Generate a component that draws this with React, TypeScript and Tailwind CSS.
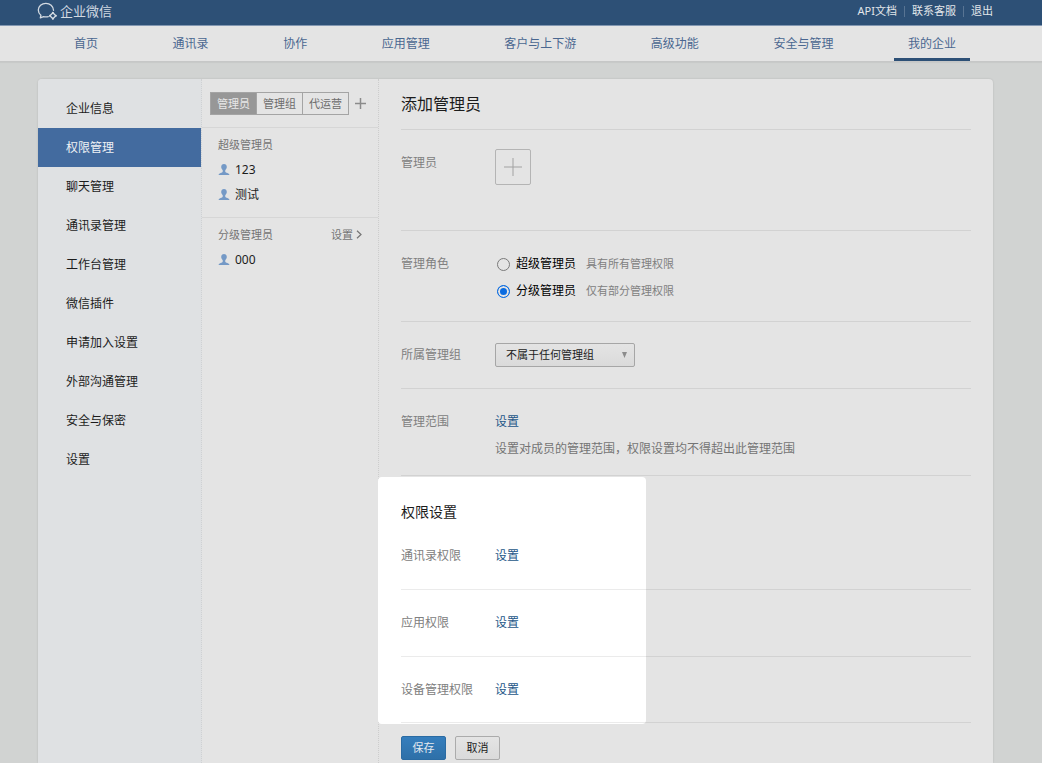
import React, { useState } from "react";

const navItems = ["首页", "通讯录", "协作", "应用管理", "客户与上下游", "高级功能", "安全与管理", "我的企业"];

const sideItems = [
  "企业信息",
  "权限管理",
  "聊天管理",
  "通讯录管理",
  "工作台管理",
  "微信插件",
  "申请加入设置",
  "外部沟通管理",
  "安全与保密",
  "设置",
];

const roles = [
  { id: "super", name: "超级管理员", note: "具有所有管理权限" },
  { id: "sub", name: "分级管理员", note: "仅有部分管理权限" },
];

function Logo() {
  return (
    <svg width="20" height="18" viewBox="0 0 20 18" fill="none" stroke="#d3dae2" strokeLinecap="round" strokeLinejoin="round" aria-hidden="true">
      <path d="M16.500 8.300C16.300 4.300 13 1.300 8.900 1.300 4.700 1.300 1.300 4.300 1.300 8.100c0 2.100 1 3.900 2.600 5.200L3.300 15.800l3.300-1.200c1.700.4 3.200.4 4.700 0" strokeWidth="1.300" />
      <path d="M15.900 10.800l2.900 3-2.900 3-3-3z" strokeWidth="1.300" />
      <path d="M15.900 10.800v.1M12.900 13.800h.1M18.800 13.800h.1M15.900 16.700v.1" strokeWidth="2" />
    </svg>
  );
}

function Person() {
  return (
    <svg width="12" height="12" viewBox="0 0 12 12" fill="#7499c6" aria-hidden="true">
      <path d="M6 0c1.700 0 2.800 1.300 2.800 2.900 0 1.300-.9 2.300-1.400 3-.3.600-.2 1.700.1 2.200.4.600 1.700.9 2.700 1.300.8.300 1.200.8 1.200 1.600H.6c0-.8.4-1.300 1.200-1.600 1-.4 2.300-.7 2.700-1.300.3-.5.4-1.600.1-2.200-.5-.7-1.400-1.700-1.400-3C3.200 1.300 4.300 0 6 0z" />
    </svg>
  );
}

function Row({ label, className, children }: { label: React.ReactNode; className: string; children: React.ReactNode }) {
  return (
    <div className={`flex border-b border-black/8 ${className}`}>
      <div className="w-[94px] shrink-0 pt-[23px] leading-5 text-[#808080]">{label}</div>
      <div className="min-w-0 flex-1">{children}</div>
    </div>
  );
}

function SetLink() {
  return (
    <a href="#set" className="block w-fit pt-[23px] leading-5 text-[#245788]">
      设置
    </a>
  );
}

function Member({ name }: { name: string }) {
  return (
    <li className="flex h-[25px] items-center gap-[5px]">
      <Person />
      <span>{name}</span>
    </li>
  );
}

export default function App() {
  const [role, setRole] = useState("sub");

  return (
    <div className="flex min-h-screen flex-col bg-[#d1d3d2] font-['Noto_Sans','Noto_Sans_CJK_SC',sans-serif] text-xs text-[#1c1c1c]">
      <header className="flex h-[26px] items-center justify-between border-b border-[#8297b1] bg-[#2d5076] pr-[49px] pb-[3px] pl-[37px]">
        <a href="#home" className="flex items-center gap-[3px] text-[13px] leading-5 text-[#d3dae2]">
          <Logo />
          企业微信
        </a>
        <div className="flex items-center text-[11px] leading-4 text-[#e2e6ea]">
          <a href="#api">API文档</a>
          <span className="mx-[7px] h-[11px] w-px bg-[#587493]" />
          <a href="#service">联系客服</a>
          <span className="mx-[7px] h-[11px] w-px bg-[#587493]" />
          <a href="#logout">退出</a>
        </div>
      </header>

      <nav className="flex h-[36px] justify-between border-b border-[#c6c7c7] bg-[#e4e4e4] pr-[72px] pl-[60px] shadow-[0_1px_1px_rgba(0,0,0,0.04)]">
        {navItems.map((item, i) => (
          <a
            key={item}
            href={`#nav-${i}`}
            className={`flex h-[35px] items-center border-b-[3px] px-[14px] pt-[3px] text-[#4a6790] ${
              i === 7 ? "border-[#2d5076]" : "border-transparent"
            }`}
          >
            {item}
          </a>
        ))}
      </nav>

      <div className="mt-[17px] mr-[49px] ml-[38px] flex flex-1 rounded-t bg-[#e4e4e4] shadow-[0_0_2px_rgba(0,0,0,0.15)]">
        <aside className="w-[164px] shrink-0 rounded-tl border-r border-dotted border-[#cfd1d3] bg-[#dfe1e3] pt-[10px]">
          {sideItems.map((item, i) => (
            <a
              key={item}
              href={`#side-${i}`}
              className={`flex h-[39px] items-center pl-[28px] ${i === 1 ? "bg-[#436b9f] text-[#eef1f5]" : "text-[#1c1c1c]"}`}
            >
              {item}
            </a>
          ))}
        </aside>

        <section className="w-[177px] shrink-0 border-r border-dotted border-[#cdcdcd]">
          <div className="flex h-[49px] items-center border-b border-[#d6d6d6] pl-[8px]">
            <div className="flex divide-x divide-[#a4a4a4] border border-[#a4a4a4] text-[11px] leading-[21px] text-[#6c6c6c]">
              <button type="button" className="w-[46px] bg-[#979797] text-[#e8e8e8]">管理员</button>
              <button type="button" className="w-[46px]">管理组</button>
              <button type="button" className="w-[45px]">代运营</button>
            </div>
            <button type="button" aria-label="添加" className="ml-[6px]">
              <svg width="11" height="11" viewBox="0 0 11 11" stroke="#8b8b8b" strokeWidth="1.500" aria-hidden="true">
                <path d="M5.500 0v11M0 5.500h11" />
              </svg>
            </button>
          </div>
          <div className="border-b border-[#d6d6d6] px-[16px] pt-[4px] pb-[10px]">
            <h2 className="text-[11px] leading-[25px] text-[#747474]">超级管理员</h2>
            <ul>
              <Member name="123" />
              <Member name="测试" />
            </ul>
          </div>
          <div className="px-[16px] pt-[4px]">
            <div className="flex items-center justify-between text-[11px] leading-[25px] text-[#747474]">
              <h2>分级管理员</h2>
              <a href="#sub-set" className="flex items-center gap-[3px]">
                设置
                <svg width="6" height="9" viewBox="0 0 6 9" fill="none" stroke="#747474" strokeWidth="1.200" aria-hidden="true">
                  <path d="M1 .7l4 3.800-4 3.800" />
                </svg>
              </a>
            </div>
            <ul>
              <Member name="000" />
            </ul>
          </div>
        </section>

        <main className="min-w-0 flex-1 px-[22px]">
          <h1 className="flex h-[51px] items-center border-b border-black/8 text-base">添加管理员</h1>

          <Row label="管理员" className="h-[101px]">
            <button type="button" aria-label="添加管理员" className="mt-[19px] flex size-[36px] items-center justify-center rounded-[2px] border border-[#b4b4b4]">
              <svg width="18" height="18" viewBox="0 0 18 18" stroke="#a2a2a2" aria-hidden="true">
                <path d="M9 0v18M0 9h18" />
              </svg>
            </button>
          </Row>

          <Row label="管理角色" className="h-[91px]">
            <div className="flex flex-col gap-[7px] pt-[23px]">
              {roles.map((r) => (
                <label key={r.id} className="flex h-5 items-center">
                  <input
                    type="radio"
                    name="role"
                    checked={role === r.id}
                    onChange={() => setRole(r.id)}
                    className="mr-[6px] ml-[2px] size-[13px] appearance-none rounded-full border border-[#7a7a7a] checked:border-[#0a6be0] checked:bg-[#0a6be0] checked:shadow-[inset_0_0_0_2px_#e4e4e4]"
                  />
                  <span className="w-[70px] text-black">{r.name}</span>
                  <span className="text-[11px] text-[#808080]">{r.note}</span>
                </label>
              ))}
            </div>
          </Row>

          <Row label={<label htmlFor="group">所属管理组</label>} className="h-[67px]">
            <div className="relative mt-[21px] h-[24px] w-[140px]">
              <select
                id="group"
                className="h-full w-full appearance-none rounded-[2px] border border-[#a6a6a6] bg-linear-to-b from-[#e4e4e4] to-[#dadada] pl-[10px] text-[11px] text-[#1c1c1c]"
              >
                <option>不属于任何管理组</option>
              </select>
              <svg className="pointer-events-none absolute top-[9px] right-[8px]" width="5" height="6" viewBox="0 0 5 6" fill="#8c8c8c" aria-hidden="true">
                <path d="M0 0h5L2.500 6z" />
              </svg>
            </div>
          </Row>

          <Row label="管理范围" className="h-[87px]">
            <SetLink />
            <p className="mt-[7px] leading-5 text-[#747474]">设置对成员的管理范围，权限设置均不得超出此管理范围</p>
          </Row>

          <section className="relative isolate">
            <div className="absolute top-px -bottom-px -left-[23px] -z-10 w-[268px] rounded bg-white" />
            <h2 className="pt-[25px] text-sm leading-[22px]">权限设置</h2>
            <Row label="通讯录权限" className="h-[67px]">
              <SetLink />
            </Row>
            <Row label="应用权限" className="h-[67px]">
              <SetLink />
            </Row>
            <Row label="设备管理权限" className="h-[66px]">
              <SetLink />
            </Row>
          </section>

          <div className="flex gap-[9px] pt-[13px]">
            <button type="button" className="h-[24px] w-[45px] rounded-[2px] border border-[#2a6ba3] bg-linear-to-b from-[#357ebd] to-[#2e70a8] text-[11px] text-[#e4e9ee]">
              保存
            </button>
            <button type="button" className="h-[24px] w-[45px] rounded-[2px] border border-[#ababab] bg-linear-to-b from-[#e4e4e4] to-[#dadada] text-[11px] text-[#1c1c1c]">
              取消
            </button>
          </div>
        </main>
      </div>
    </div>
  );
}
